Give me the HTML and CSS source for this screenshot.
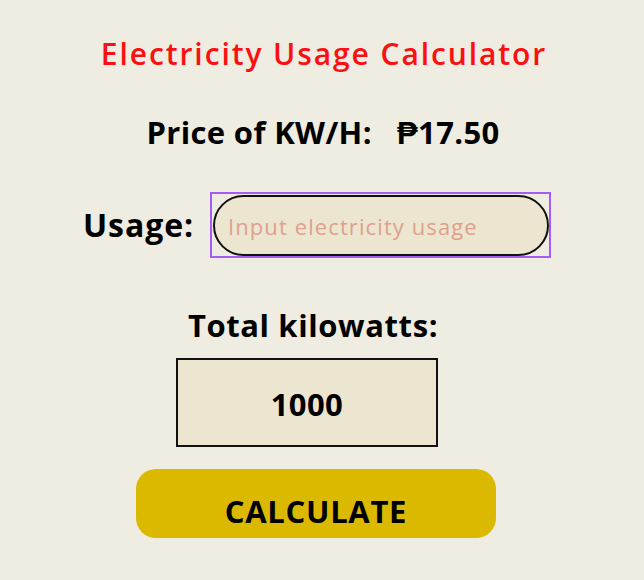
FILE: index.html
```html
<!DOCTYPE html>
<html>
<head>
<meta charset="utf-8">
<link rel="stylesheet" href="styles.css">
</head>
<body>
<main class="calc">
  <h1 class="title">Electricity Usage Calculator</h1>
  <p class="price">Price of KW/H:&nbsp;&nbsp; ₱17.50</p>
  <div class="usage-row">
    <label class="usage-label" for="usage">Usage:</label>
    <div class="focus-ring">
      <input id="usage" class="usage-input" type="text" placeholder="Input electricity usage">
    </div>
  </div>
  <p class="total-label">Total kilowatts:</p>
  <div class="total-box">1000</div>
  <button class="calc-btn">CALCULATE</button>
</main>
</body>
</html>
```

FILE: styles.css
```css
html, body {
  margin: 0;
  padding: 0;
  background: #efece1;
}
body {
  width: 644px;
  height: 580px;
  font-family: "Open Sans", "Liberation Sans", sans-serif;
  color: #000;
}
.calc {
  display: flex;
  flex-direction: column;
  align-items: center;
  padding-top: 33px;
}
.title {
  margin: 0 0 0 4px;
  font-size: 30px;
  font-weight: 600;
  color: #fa1010;
  line-height: 42px;
  letter-spacing: 1.9px;
}
.price {
  margin: 37px 0 0 2px;
  font-size: 31px;
  font-weight: 700;
  line-height: 40px;
  letter-spacing: 0.35px;
}
.usage-row {
  display: flex;
  align-items: center;
  gap: 16px;
  margin: 40px 0 0 -10px;
  height: 66px;
}
.usage-label {
  font-size: 32px;
  font-weight: 700;
  line-height: 40px;
  letter-spacing: 0.9px;
}
.focus-ring {
  border: 2px solid #a45cf5;
  padding: 1px 0 0 1px;
  width: 341px;
  height: 66px;
  box-sizing: border-box;
  display: flex;
}
.usage-input {
  flex: 1;
  height: 61px;
  box-sizing: border-box;
  border: 2px solid #111;
  border-radius: 31px;
  background: #ece6d0;
  padding: 0 13px;
  font-family: inherit;
  font-size: 22px;
  letter-spacing: 1.1px;
  color: #222;
  outline: none;
}
.usage-input::placeholder {
  color: #df9f8e;
}
.total-label {
  margin: 47px 18px 0 0;
  font-size: 31px;
  font-weight: 700;
  line-height: 40px;
  letter-spacing: 0.6px;
}
.total-box {
  margin: 13px 30px 0 0;
  width: 262px;
  height: 89px;
  box-sizing: border-box;
  border: 2px solid #111;
  background: #ece6d0;
  display: flex;
  align-items: center;
  justify-content: center;
  padding-top: 3px;
  font-size: 31px;
  font-weight: 700;
  letter-spacing: 0.4px;
}
.calc-btn {
  margin: 22px 12px 0 0;
  width: 360px;
  height: 69px;
  border: none;
  border-radius: 20px;
  background: #dbb900;
  font-family: inherit;
  font-size: 31px;
  font-weight: 700;
  letter-spacing: 0.7px;
  color: #000;
  padding: 14px 0 0 0;
}
```
